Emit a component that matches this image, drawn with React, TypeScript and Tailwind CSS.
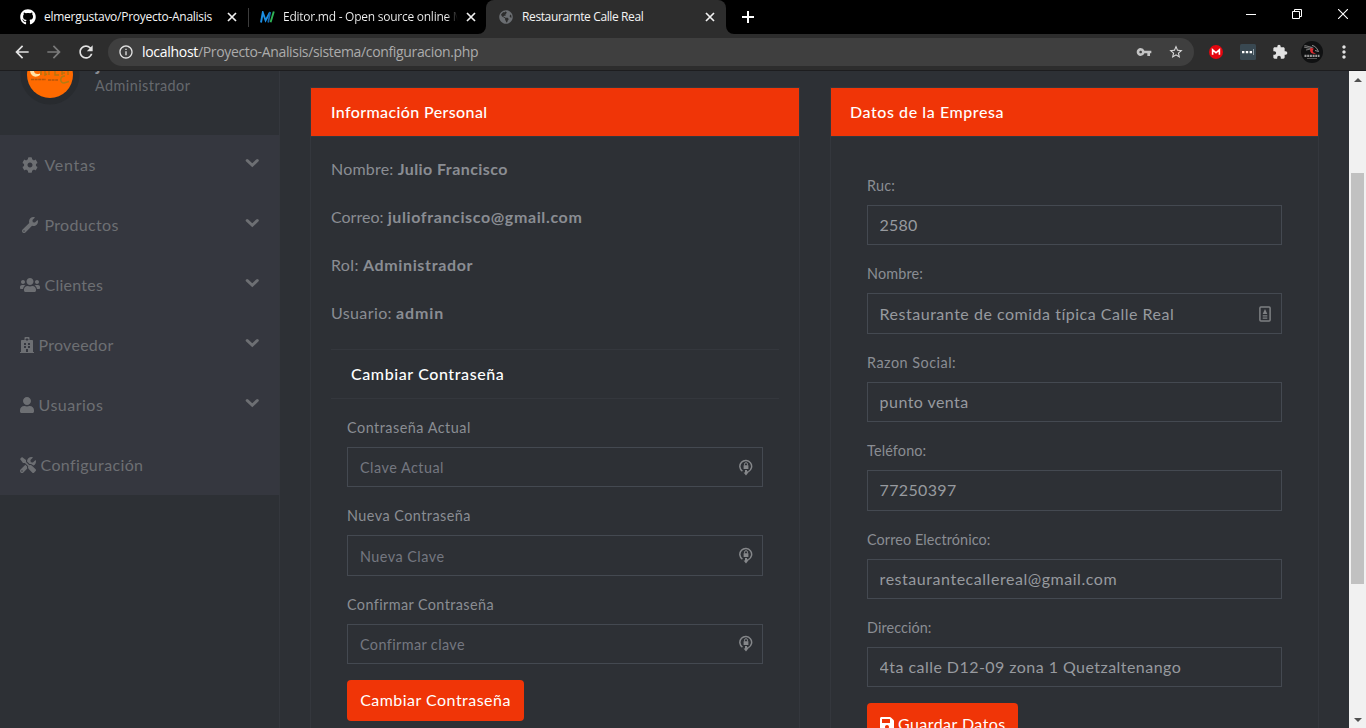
import type { ReactNode } from "react";
import { FaChevronDown, FaCog, FaGithub, FaGlobeAmericas, FaHospital, FaSave, FaTools, FaUser, FaUsers, FaWrench } from "react-icons/fa";
import { MdArrowBack, MdArrowForward, MdExtension, MdInfoOutline, MdMoreVert, MdRefresh, MdStarBorder, MdVpnKey } from "react-icons/md";

function CloseIcon({ className = "" }: { className?: string }) {
  return (
    <svg viewBox="0 0 10 10" className={`size-[10px] shrink-0 ${className}`} stroke="#f1f1f1" strokeWidth="1.7" fill="none">
      <path d="M1 1L9 9M9 1L1 9" />
    </svg>
  );
}

function TabStrip() {
  return (
    <div className="flex h-[34px] shrink-0 bg-black font-['Open_Sans',sans-serif] text-[12px] leading-[34px] text-[#f4f4f4]">
      <div className="flex w-[248px] items-center border-r border-transparent pl-[20px]">
        <FaGithub className="size-4 shrink-0 text-white" />
        <span className="ml-2 w-[170px] whitespace-nowrap tracking-[-0.267px]">elmergustavo/Proyecto-Analisis</span>
        <CloseIcon className="ml-[13px]" />
      </div>
      <div className="my-[8px] h-[19px] w-px bg-[#3c3c3c]" />
      <div className="flex w-[237px] items-center pl-[11px]">
        <svg viewBox="0 0 15 12" className="h-3 w-[15px] shrink-0" fill="none">
          <path d="M1 11.5L2.8 1.5L5.6 9.5L10 1.2" stroke="#1b8fe4" strokeWidth="1.9" />
          <path d="M10.2 1L8.2 11.5" stroke="#1667b0" strokeWidth="1.7" />
          <path d="M13.8 .5L10.6 11.3" stroke="#2fb457" strokeWidth="1.9" />
        </svg>
        <span className="ml-2 block w-[176px] overflow-hidden whitespace-nowrap bg-linear-to-r from-[#f4f4f4] from-93% to-black bg-clip-text tracking-[-0.252px] text-transparent">
          Editor.md - Open source online M
        </span>
        <CloseIcon className="ml-[7px]" />
      </div>
      <div className="relative flex w-[240px] items-center rounded-t-[8px] bg-[#2d2d2d] pl-[13px]">
        <svg viewBox="0 0 8 8" className="absolute bottom-0 -left-2 size-2" fill="#2d2d2d">
          <path d="M8 0V8H0A8 8 0 0 0 8 0Z" />
        </svg>
        <svg viewBox="0 0 8 8" className="absolute -right-2 bottom-0 size-2" fill="#2d2d2d">
          <path d="M0 0V8H8A8 8 0 0 1 0 0Z" />
        </svg>
        <FaGlobeAmericas className="size-[14px] shrink-0 text-[#6b6e72]" />
        <span className="ml-[9px] w-[174px] whitespace-nowrap tracking-[-0.38px]">Restaurarnte Calle Real</span>
        <CloseIcon className="ml-[9px]" />
      </div>
      <div className="flex flex-1 items-center">
        <svg viewBox="0 0 12 12" className="ml-4 size-3" stroke="#fff" strokeWidth="2">
          <path d="M6 0V12M0 6H12" />
        </svg>
      </div>
      <div className="flex h-[28px] items-center gap-[36px] pr-[18px]">
        <svg viewBox="0 0 10 10" className="size-[10px]" stroke="#fff">
          <path d="M0 5.5H10" />
        </svg>
        <svg viewBox="0 0 10 10" className="size-[10px]" stroke="#fff" fill="none">
          <path d="M.5 2.5H7.5V9.5H.5ZM2.5 2.5V.5H9.5V7.5H7.5" />
        </svg>
        <svg viewBox="0 0 10 10" className="size-[10px]" stroke="#fff" strokeWidth="1.1">
          <path d="M0 0L10 10M10 0L0 10" />
        </svg>
      </div>
    </div>
  );
}

function Toolbar() {
  return (
    <div className="flex h-[37px] shrink-0 items-center border-b border-[#1d1d1f] bg-[#2d2d2d] text-[#e2e2e2]">
      <MdArrowBack className="ml-3 size-5" />
      <MdArrowForward className="ml-3 size-5 text-[#7a7a7a]" />
      <MdRefresh className="ml-3 size-5" />
      <div className="ml-3 flex h-7 w-[1086px] items-center rounded-full bg-[#3f3f3f] font-['Open_Sans',sans-serif] text-[14px] whitespace-nowrap">
        <MdInfoOutline className="ml-[10px] size-4" />
        <span className="mb-px ml-2 tracking-[-0.294px] text-white">localhost</span>
        <span className="mb-px flex-1 tracking-[-0.345px] text-[#acacac]">/Proyecto-Analisis/sistema/configuracion.php</span>
        <MdVpnKey className="mr-4 size-4 text-[#c4c4c4]" />
        <MdStarBorder className="mr-[10px] size-4 text-[#dadada]" />
      </div>
      <svg viewBox="0 0 14 14" className="ml-[15px] size-[14px]">
        <circle cx="7" cy="7" r="7" fill="#e5060e" />
        <path d="M3.6 9.7V4.8L7 7.8L10.4 4.8V9.7" stroke="#fff" strokeWidth="1.6" fill="none" />
      </svg>
      <svg viewBox="0 0 16 16" className="ml-[17px] size-4">
        <rect width="16" height="16" rx="1.5" fill="#394851" />
        <path d="M2 7H4.4V9.2H2ZM5.8 7H8.2V9.2H5.8ZM9.6 7H12V9.2H9.6Z" fill="#fff" />
        <path d="M13.5 5V11" stroke="#93a0a8" />
      </svg>
      <MdExtension className="ml-4 size-4" />
      <svg viewBox="0 0 22 22" className="ml-[13px] size-[22px]">
        <circle cx="11" cy="11" r="11" fill="#101112" />
        <path d="M3.5 4.5L11 6.5L9 7.5L3 6M5 9L9.5 8" stroke="#777" strokeWidth="1.1" fill="none" />
        <path d="M11 4.5C14 5 15.5 6.5 17.5 10.5L14 9.5" stroke="#999" strokeWidth=".9" fill="none" />
        <path d="M9.5 7C8 11 11 14 15 12.2C11.5 12 11 10 12.8 7.5Z" fill="#e02b30" />
        <path d="M3.5 14.8H18.5" stroke="#999" strokeWidth="2.2" strokeDasharray="2 .7" />
        <path d="M6 17.5H16" stroke="#555" />
      </svg>
      <MdMoreVert className="ml-[11px] size-[20px]" />
    </div>
  );
}

const menu = [
  { label: "Ventas", icon: <FaCog />, box: "w-5", track: "tracking-[0.7px]", open: true },
  { label: "Productos", icon: <FaWrench />, box: "w-5", track: "tracking-[0.33px]", open: true },
  { label: "Clientes", icon: <FaUsers className="size-5" />, box: "w-5", track: "tracking-[0.24px]", open: true },
  { label: "Proveedor", icon: <FaHospital />, box: "w-[14px]", track: "tracking-[0.27px]", open: true },
  { label: "Usuarios", icon: <FaUser className="h-4 w-[14px]" />, box: "w-[14px]", track: "tracking-[0.5px]", open: true },
  { label: "Configuración", icon: <FaTools />, box: "w-4", track: "tracking-[0.36px]", open: false },
];

function Sidebar() {
  return (
    <aside className="w-[280px] shrink-0 border-r border-[#34373d] bg-[#2d3035]">
      <div className="flex h-16 overflow-hidden">
        <svg viewBox="0 0 60 34" className="ml-5 h-[34px] w-[60px]">
          <circle cx="30" cy="4" r="29.5" fill="#282b2f" />
          <circle cx="30" cy="4" r="23" fill="#ff6a00" />
          <path d="M10 0C11 6 16 7 20 4V2.5C16 4 14 2 14 0Z" fill="#ffe3a8" />
          <path d="M21 0V4M25 0V4L27 3M29 0V4M35 0V4L39 4M42 0V4M42 2H45M48 0V4" stroke="#b57410" strokeWidth="1.4" fill="none" />
          <path d="M11 8.5H26M28 9H38" stroke="#b5560b" strokeWidth="1.5" strokeDasharray="3 .6" fill="none" />
          <path d="M45 5C39.5 5 39.5 12 44 12L49 10.5" stroke="#b57b12" strokeWidth="1.6" fill="none" />
        </svg>
        <div className="ml-[15px] flex flex-col">
          <div className="-mt-[18px] h-[21px] pl-px text-[18px] leading-[22px] font-bold text-[#8a8d93]">julio</div>
          <div className="h-6 text-[14.4px] leading-6 tracking-[0.45px] text-[#66696e]">Administrador</div>
        </div>
      </div>
      <nav className="bg-[#35373f]">
        {menu.map((m) => (
          <div key={m.label} className="flex h-[60px] items-center pr-5 pl-5 text-[#6d6f73]">
            <span className={`flex shrink-0 justify-center ${m.box}`}>{m.icon}</span>
            <span className={`ml-[4.5px] flex-1 text-[16px] ${m.track}`}>{m.label}</span>
            {m.open && (
              <svg viewBox="0 0 14 10" className="mb-1 h-[10px] w-[14px]" fill="none" stroke="currentColor" strokeWidth="3" strokeLinecap="round">
                <path d="M2.2 2.5L7.3 7.3L12.3 2.5" />
              </svg>
            )}
          </div>
        ))}
      </nav>
    </aside>
  );
}

function Card({ title, className, children }: { title: string; className: string; children: ReactNode }) {
  return (
    <section className="h-[800px] border border-[#34373d] bg-[#2d3035]">
      <h3 className={`flex h-12 items-center bg-[#f03507] text-[16px] font-medium text-white ${className}`}>{title}</h3>
      <div className="border-t border-[#34373d]">{children}</div>
    </section>
  );
}

interface FieldProps {
  label: string;
  labelTrack: string;
  inputClass: string;
  value?: string;
  placeholder?: string;
  icon?: ReactNode;
}

function Field({ label, labelTrack, inputClass, value, placeholder, icon }: FieldProps) {
  return (
    <div className="mb-4">
      <label className={`mb-[7px] block h-[25px] pt-px text-[14.4px] leading-6 text-[#8a8d93] ${labelTrack}`}>{label}</label>
      <div className="flex h-[40.4px] items-center border border-[#444951] pr-[9px] pl-[11.6px]">
        <input
          className={`h-full w-full min-w-0 bg-transparent outline-none placeholder:text-[#747780] ${value ? "pb-px" : "pt-px pl-[0.4px]"} text-[#979a9f] ${inputClass}`}
          defaultValue={value}
          placeholder={placeholder}
        />
        {icon}
      </div>
    </div>
  );
}

const lockIcon = (
  <svg viewBox="0 0 14 17" className="h-[17px] w-[14px] shrink-0" fill="none">
    <path d="M3.4 12.2A5.9 5.9 0 1 1 9.4 12.6" stroke="#85878a" strokeWidth="1.5" />
    <path d="M5.5 6.5V5.2A1.5 1.5 0 0 1 8.5 5.2V6.5" stroke="#85878a" strokeWidth="1" />
    <path d="M4.6 6.3H9.4V10H4.6ZM6 11H8V12.2H10.3L7 16.5L4.6 13.6H6Z" fill="#85878a" />
  </svg>
);

const contactIcon = (
  <svg viewBox="0 0 12 16" className="mr-px h-4 w-3 shrink-0" fill="none">
    <rect x=".9" y="1" width="10.2" height="14" rx="1" stroke="#7e8083" strokeWidth="1.5" />
    <path d="M6 3L7.2 5.5L8.3 8H3.7L4.8 5.5ZM3.7 9.3H8.3V10.5H3.7ZM3.7 11.5H8.3V12.7H3.7Z" fill="#7e8083" />
  </svg>
);

const person = [
  { k: "Nombre:", kt: "tracking-[0.2px]", v: "Julio Francisco", vt: "tracking-[0.43px]" },
  { k: "Correo:", kt: "tracking-[0.01px]", v: "juliofrancisco@gmail.com", vt: "tracking-[0.62px]" },
  { k: "Rol:", kt: "tracking-[0.35px]", v: "Administrador", vt: "tracking-[0.65px]" },
  { k: "Usuario:", kt: "tracking-[0.38px]", v: "admin", vt: "tracking-[0.88px]" },
];

const passwords: FieldProps[] = [
  { label: "Contraseña Actual", labelTrack: "tracking-[0.5px]", placeholder: "Clave Actual", inputClass: "text-[14.4px] tracking-[0.486px]" },
  { label: "Nueva Contraseña", labelTrack: "tracking-[0.473px]", placeholder: "Nueva Clave", inputClass: "text-[14.4px] tracking-[0.477px]" },
  { label: "Confirmar Contraseña", labelTrack: "tracking-[0.403px]", placeholder: "Confirmar clave", inputClass: "text-[14.4px] tracking-[0.399px]" },
];

const company: FieldProps[] = [
  { label: "Ruc:", labelTrack: "tracking-[0.197px]", value: "2580", inputClass: "text-[16px] tracking-[0.22px]" },
  { label: "Nombre:", labelTrack: "tracking-[0.149px]", value: "Restaurante de comida típica Calle Real", inputClass: "text-[16px] tracking-[0.512px]", icon: contactIcon },
  { label: "Razon Social:", labelTrack: "tracking-[0.5px]", value: "punto venta", inputClass: "text-[16px] tracking-[0.45px]" },
  { label: "Teléfono:", labelTrack: "tracking-[0.15px]", value: "77250397", inputClass: "text-[16px] tracking-[0.345px]" },
  { label: "Correo Electrónico:", labelTrack: "tracking-[0.1px]", value: "restaurantecallereal@gmail.com", inputClass: "text-[16px] tracking-[0.54px]" },
  { label: "Dirección:", labelTrack: "tracking-[0.085px]", value: "4ta calle D12-09 zona 1 Quetzaltenango", inputClass: "text-[16px] tracking-[0.45px]" },
];

function Scrollbar() {
  return (
    <div className="flex w-[17px] shrink-0 flex-col items-center bg-[#f1f1f1]">
      <div className="flex h-[17px] items-center">
        <svg viewBox="0 0 8 4" className="h-1 w-2" fill="#505050"><path d="M0 4L4 0L8 4Z" /></svg>
      </div>
      <div className="mt-[85px] h-[411px] w-[13px] bg-[#c1c1c1]" />
      <div className="mt-auto flex h-[17px] items-center">
        <svg viewBox="0 0 8 4" className="h-1 w-2" fill="#505050"><path d="M0 0L4 4L8 0Z" /></svg>
      </div>
    </div>
  );
}

export default function App() {
  return (
    <div className="flex h-[728px] w-[1366px] flex-col overflow-hidden">
      <TabStrip />
      <Toolbar />
      <div className="flex min-h-0 flex-1 overflow-hidden bg-[#2d3035] font-['Lato',sans-serif]">
        <Sidebar />
        <main className="grid min-w-0 flex-1 grid-cols-[490px_489px] content-start gap-x-[30px] pt-4 pl-[30px]">
          <Card title="Información Personal" className="pl-5 tracking-[0.38px]">
            <div className="px-5 pt-5">
              {person.map((p) => (
                <p key={p.k} className="mb-6 h-6 text-[16px] leading-6 whitespace-nowrap text-[#8a8d93]">
                  <span className={p.kt}>{p.k}</span> <b className={p.vt}>{p.v}</b>
                </p>
              ))}
              <div className="mt-[24px] flex h-[50px] items-center border-y border-[#34373d] pl-5 text-[16px] font-medium tracking-[0.6px] text-white">
                Cambiar Contraseña
              </div>
              <form className="px-4 pt-4">
                {passwords.map((f) => (
                  <Field key={f.label} {...f} icon={lockIcon} />
                ))}
                <button type="button" className="h-[41px] w-[177px] rounded-[4px] bg-[#f03507] pb-[2px] text-[16px] tracking-[0.471px] text-white">
                  Cambiar Contraseña
                </button>
              </form>
            </div>
          </Card>
          <Card title="Datos de la Empresa" className="pl-[19px] tracking-[0.57px]">
            <form className="px-9 pt-9">
              {company.map((f) => (
                <Field key={f.label} {...f} />
              ))}
              <button type="button" className="flex h-[41px] w-[151px] items-center rounded-[4px] bg-[#f03507] pl-[13px] text-[16px] tracking-[0.441px] text-white">
                <FaSave className="mr-1 h-4 w-[14px]" />
                Guardar Datos
              </button>
            </form>
          </Card>
        </main>
        <Scrollbar />
      </div>
    </div>
  );
}
